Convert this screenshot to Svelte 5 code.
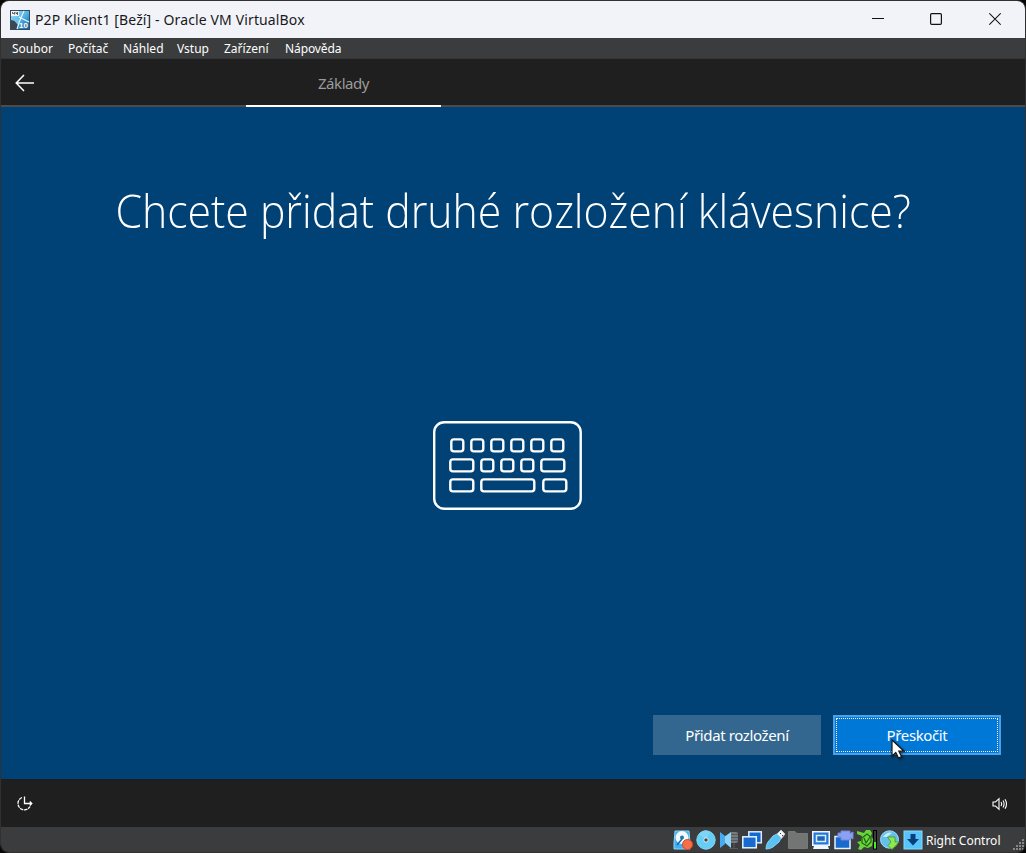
<script>
  const menus = ['Soubor', 'Počítač', 'Náhled', 'Vstup', 'Zařízení', 'Nápověda'];
  const keys = [
    [26, 29, 12], [46, 29, 12], [66, 29, 12], [86, 29, 12], [106, 29, 12], [126, 29, 12],
    [25, 49, 23], [56, 49, 12], [76, 49, 12], [96, 49, 12], [116, 49, 23],
    [25, 69, 23], [56, 69, 53], [118, 69, 23]
  ];
</script>

<div class="screen">
  <div class="window">
    <header class="titlebar">
      <svg class="app-icon" width="20" height="20" viewBox="0 0 20 20">
        <defs>
          <linearGradient id="appbg" x1="0" y1="0" x2="1" y2="1"><stop offset="0" stop-color="#a6e4fa" /><stop offset=".5" stop-color="#55b4e6" /><stop offset="1" stop-color="#125da5" /></linearGradient>
        </defs>
        <rect width="20" height="20" fill="#344c60" />
        <rect x="1" y="1" width="18" height="18" fill="url(#appbg)" />
        <path d="M1 10l8 2-2 7H1z" fill="#3b4852" /><path d="M1 7l9 3-2 5z" fill="#6fc4ee" />
        <path d="M14 1l-4 9-3 9M9 7l10 5" fill="none" stroke="#e9faff" stroke-width="1.1" />
        <rect x="1" y="1" width="8" height="5" fill="#f3f3f3" />
        <path d="M2.5 2v1.5h2V2M4.5 3.5v1M6 2v1.5h2M7.5 2v3" fill="none" stroke="#555" stroke-width=".9" />
        <text x="9" y="17.5" class="ten">10</text>
      </svg>
      <h1>P2P Klient1 [Beží] - Oracle VM VirtualBox</h1>
      <div class="controls">
        <svg class="min" width="12" height="14" viewBox="0 0 12 14"><path d="M0 6.5h12" /></svg>
        <svg width="12" height="14" viewBox="0 0 12 14"><rect x=".6" y="1.6" width="10.8" height="10.8" rx="1.2" /></svg>
        <svg width="12" height="14" viewBox="0 0 12 14"><path d="M.3 1.3l11.4 11.4M11.7 1.3L.3 12.7" /></svg>
      </div>
    </header>

    <nav class="menubar">
      {#each menus as m, i}<span class="m{i}">{m}</span>{/each}
    </nav>

    <div class="topbar">
      <svg class="back" width="20" height="18" viewBox="0 0 20 18"><path d="M19 9H1.5M9 1L1.2 9 9 17" /></svg>
      <div class="tab"><span>Základy</span></div>
    </div>

    <main>
      <h2><span>Chcete přidat druhé rozložení klávesnice?</span></h2>
      <svg class="keyboard" width="165" height="110" viewBox="0 0 165 110">
        <rect x="9.2" y="12.2" width="146.5" height="86.5" rx="10" />
        {#each keys as [x, y, w]}
          <rect {x} {y} width={w} height="12" rx="2.6" transform="translate(0.3 0.4)" />
        {/each}
      </svg>
      <div class="actions">
        <button class="secondary"><span>Přidat rozložení</span></button>
        <button class="primary"><span>Přeskočit</span>
          <svg class="cursor" width="17" height="23" viewBox="0 0 17 23"><path d="M1 1v16l3.8-3.6L7.5 19l3-1.4-2.7-5.4H13z" /></svg>
        </button>
      </div>
    </main>

    <div class="bottombar">
      <svg width="18" height="18" viewBox="0 0 18 18" class="access">
        <path d="M8.5 1.5v7H16M13.8 6.5l2 2-2 2" />
        <path d="M6 2.5A6.4 6.4 0 1 0 14 11.5" stroke-dasharray="3.5 .8" />
      </svg>
      <svg width="16" height="14" viewBox="0 0 16 14" class="sound">
        <path d="M1 5h2.5L7 1.7v10.6L3.5 9H1zM9 5q1.3 2 0 4M11 3.5q2.2 3.5 0 7M13 2.2q3 4.8 0 9.6" />
      </svg>
    </div>

    <footer>
      <div class="devices">
        <svg viewBox="0 0 22 22"><path d="M3 2h14l1 12v6H2v-6z" fill="#43aef0" stroke="#8cd7fa" /><circle cx="10" cy="8.5" r="6.5" fill="#f1faff" /><circle cx="10" cy="8.5" r="2" fill="#2475a9" /><path d="M5 16l5-6" stroke="#116bb0" stroke-width="1.6" /><circle cx="15.5" cy="15.5" r="5" fill="#f47046" stroke="#da452b" /></svg>
        <svg viewBox="0 0 22 22"><circle cx="11" cy="11" r="9.2" fill="#68cdf5" stroke="#80daf9" /><path d="M11 11L4 5q5-6 11-2z" fill="#7dd5f7" /><circle cx="11" cy="11" r="2.5" fill="#e8f8ff" /><circle cx="11" cy="11" r="1.8" fill="#44494d" /></svg>
        <svg viewBox="0 0 22 22"><rect x="12" y="3" width="8" height="11" rx="2" fill="#77797b" /><path d="M12 5.5h8M12 8.500h8M12 11.500h8M16 14v5M11 19.500h9" fill="none" stroke="#58595b" /><path d="M6 8l7-5v16l-7-6z" fill="#8ed6f8" /><path d="M2 3l5 4v8l-5 4z" fill="#48aaf0" /></svg>
        <svg viewBox="0 0 22 22"><rect x="7.8" y="2.8" width="12.5" height="11" fill="#1469cf" stroke="#d9eafb" stroke-width="1.5" /><rect x="1.8" y="7.8" width="13.5" height="11" fill="#176bd0" stroke="#e7f4ff" stroke-width="1.5" /></svg>
        <svg viewBox="0 0 22 22"><path d="M13 5l4-4 4 4-4 5z" fill="#f3f4f5" stroke="#c2c5c8" /><path d="M16 4l1 1m1 1l1 1" stroke="#444" /><path d="M9 7l4-2 4 4-2 4-6 5q-3 2-7 2 0-4 2-7z" fill="#5bc0f2" stroke="#83d7fa" /></svg>
        <svg viewBox="0 0 22 22"><path d="M1.5 2.5H8l2 2h10.500v15h-19z" fill="#737474" stroke="#777878" /></svg>
        <svg viewBox="0 0 22 22"><path d="M2 2h18v15h-2l1 3H3l1-3H2z" fill="#eef6ff" /><rect x="3.5" y="3.5" width="15" height="12" fill="#2679d7" /><rect x="6.5" y="6.5" width="9" height="6" fill="#1e65b5" stroke="#d6efff" stroke-width="1.5" /></svg>
        <svg viewBox="0 0 22 22"><rect x="2" y="7.5" width="15" height="12" fill="#186acd" stroke="#e4f2ff" stroke-width="1.5" /><path d="M8 2h9v2.500l3-1.500v7l-3-1.500V11H8V8H5V4h3z" fill="#8ba2f4" stroke="#7187dc" /></svg>
        <svg viewBox="0 0 22 22"><path d="M6 7L1 5V2l7 2 2-3h4l2 3-1 3 2 3-1 7-4 2-4-1-3 3-3-1 2-4-3-3 4-1z" fill="#68d538" /><path d="M6 9l5-4 4 3 0 5-4 4-5-3zM8 9l2 5 4-6" fill="none" stroke="#1d6512" stroke-width="1.2" /><rect x="17.5" y="1.5" width="3" height="18.5" fill="#3b3c3e" stroke="#000" /><path d="M19 13v6.500" stroke="#3cf518" stroke-width="2" /></svg>
        <svg viewBox="0 0 22 22"><ellipse cx="10.5" cy="10.5" rx="9" ry="8.7" fill="#63bfee" stroke="#99def7" /><path d="M4 8q4-6 9-4l-5 4z" fill="#c5ecf8" /><path d="M8.500 8H16v5l4 0-7 7.500-4-4 3-3.500z" fill="#90e84a" stroke="#3f9a1b" stroke-width=".8" /></svg>
        <svg viewBox="0 0 22 22"><rect x="2" y="2" width="18" height="18" fill="#59c4fa" stroke="#83dafe" /><path d="M8.5 5h5v5H17l-6 6.5L5 10h3.5z" fill="#073f7a" /></svg>
      </div>
      <span class="hostkey">Right Control</span>
      <svg class="grip" width="13" height="13" viewBox="0 0 13 13">
        {#each [[10,1],[7,4],[10,4],[4,7],[7,7],[10,7],[1,10],[4,10],[7,10],[10,10]] as [x,y]}<rect {x} {y} width="2" height="2" fill="#858688" />{/each}
      </svg>
    </footer>
  </div>
</div>

<style>
  :global(body) { margin: 0; background: #080808; overflow: hidden; }
  * { box-sizing: border-box; }
  .screen { width: 1026px; height: 853px; background: #080808; font-family: "Noto Sans", "Open Sans", sans-serif; }
  .window { width: 1026px; height: 853px; border: 1px solid #313132; border-radius: 9px; overflow: hidden; display: flex; flex-direction: column; }
  h1, h2 { margin: 0; font-weight: 400; }
  span, h1 { white-space: nowrap; }
  .titlebar { height: 37px; flex: none; background: #f1f3f9; display: flex; align-items: center; padding: 0 24px 0 9px; color: #191919; }
  .app-icon { margin-right: 5px; }
  .ten { font: bold 8px "Liberation Sans", sans-serif; fill: #fff; }
  h1 { font-size: 14px; letter-spacing: .13px; line-height: 20px; }
  .controls { margin-left: auto; display: flex; gap: 47px; padding-bottom: 1px; }
  .controls svg { fill: none; stroke: #111; stroke-width: 1.2; }
  .controls .min { margin-right: -1px; }
  .menubar { height: 21px; flex: none; background: #3b3c3e; border-bottom: 1px solid #343536; color: #fff; display: flex; gap: 15px; padding-left: 11px; font-size: 12px; line-height: 22px; }
  .m0 { width: 41px; } .m1 { width: 40px; } .m2 { width: 39px; } .m3 { width: 32px; } .m4 { width: 46px; }
  .m5 { letter-spacing: -.1px; }
  .topbar { height: 48px; flex: none; background: #1f1f1f; border-bottom: 2px solid #4b4b4b; display: flex; padding-left: 14px; }
  .back { margin-top: 15px; fill: none; stroke: #fff; stroke-width: 1.5; }
  .tab { width: 195px; height: 48px; margin-left: 211px; border-bottom: 2px solid #fff; color: #9b9b9b; text-align: center; font-size: 15px; line-height: 48px; letter-spacing: -.45px; }
  main { height: 672px; flex: none; background: #004275; display: flex; flex-direction: column; align-items: center; color: #fff; }
  h2 { margin-top: 69px; height: 68px; line-height: 68px; font-family: "Open Sans", "Noto Sans", sans-serif; font-size: 45.5px; font-weight: 300; transform: scaleX(.94); }
  .keyboard { margin: 166px 11px 0 0; fill: none; stroke: #fff; stroke-width: 2.4; }
  .actions { align-self: flex-end; display: flex; gap: 12px; margin: 195px 24px 0 0; }
  button { width: 168px; height: 40px; border: 0; padding: 0; color: #fff; font: 15px "Noto Sans", sans-serif; letter-spacing: -.38px; }
  .secondary { background: #33678f; }
  .primary { position: relative; background: #0078d7; border: 2px solid #4ca0e3; outline: 1px dotted #fff; outline-offset: -4px; }
  .cursor { position: absolute; left: 56px; top: 22px; fill: #fff; stroke: #161616; stroke-width: 1.2; filter: drop-shadow(1px 1px 1px #0008); }
  .bottombar { height: 48px; flex: none; background: #1f1f1f; display: flex; align-items: center; justify-content: space-between; padding: 2px 17px 0 15px; }
  .bottombar svg { fill: none; stroke: #fff; stroke-width: 1.3; }
  .bottombar .sound { stroke-width: 1.1; }
  footer { height: 25px; flex: none; background: #3b3c3e; color: #fff; display: flex; justify-content: flex-end; align-items: center; }
  .devices { display: flex; gap: 1px; }
  .devices svg { width: 22px; height: 22px; }
  .hostkey { width: 75px; margin-left: 2px; padding-top: 2px; font-size: 12px; }
  .grip { align-self: flex-end; margin: 0 0 1px 11px; }
</style>
